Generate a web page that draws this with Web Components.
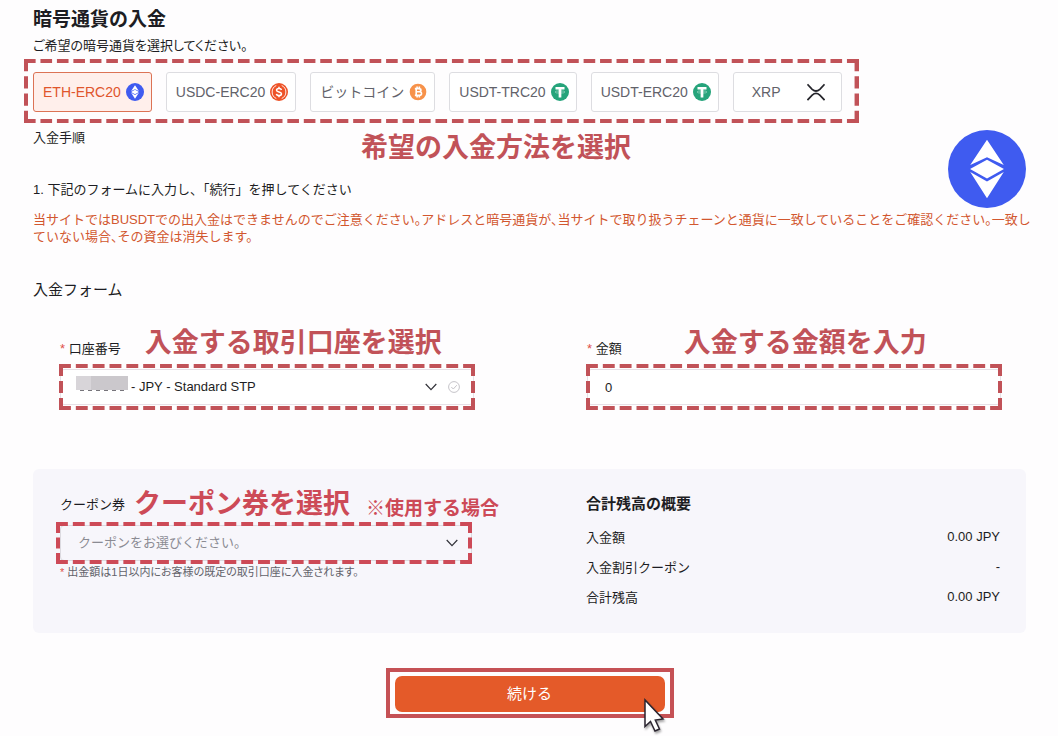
<!DOCTYPE html>
<html lang="ja">
<head>
<meta charset="utf-8">
<title>暗号通貨の入金</title>
<style>
  body {
    margin: 0;
    background: #fefdfe;
    color: #1d1d23;
    font: 13px/20px "Liberation Sans", "Noto Sans CJK JP", sans-serif;
    --mark: #c15258;
    --mark-hot: #cd4a57;
    --accent: #e45a29;
  }
</style>
</head>
<body>
<deposit-page></deposit-page>

<script>
const COINS = {
  eth: `<circle cx="20" cy="20" r="20" fill="#3f5bf0"/>
    <path fill="#fff" d="M20 5 28.6 18 20 14 11.4 18ZM20 15.2 28.7 20 20 24.9 11.3 20ZM11.4 21.6 20 26.4 28.6 21.6 20 35Z"/>`,
  usdc: `<circle cx="20" cy="20" r="20" fill="#ee5227"/>
    <path fill="none" stroke="#fff" stroke-width="2" d="M14 5.5a16 16 0 0 0 0 29M26 5.5a16 16 0 0 1 0 29"/>
    <path fill="none" stroke="#fff" stroke-width="3.4" d="M25.5 15.5c-.5-2.5-2.5-3.5-5.5-3.5-3.5 0-5.5 1.5-5.5 4 0 5.5 11 2.5 11 8 0 2.5-2 4-5.5 4-3.2 0-5.3-1.3-5.7-4M20 8.5V12M20 28v3.5"/>`,
  btc: `<circle cx="20" cy="20" r="18.5" fill="#f7924a"/>
    <path fill="none" stroke="#fff" stroke-width="3.6" d="M13 12.5h9c6 0 6 7 0 7h-6.5H23c6.5 0 6.5 8 0 8H13M16 12.5v15M18 8v4M23 8v4M18 28v4M23 28v4"/>`,
  usdt: `<circle cx="20" cy="20" r="20" fill="#26a47b"/>
    <path fill="#fff" d="M10 9h20v5.5h-7V32h-6V14.5h-7Z"/>
    <ellipse cx="20" cy="20" rx="11" ry="2.5" fill="none" stroke="#fff" stroke-opacity=".7" stroke-width="1.2"/>`,
  xrp: `<path fill="none" stroke="#25252b" stroke-width="3.8" d="M1 3 11.5 14q8.5 7.5 17 0L39 3M1 38 11.5 27q8.5-7.5 17 0L39 38"/>`
};

class CoinIcon extends HTMLElement {
  constructor() {
    super();
    this.attachShadow({ mode: 'open' });
  }

  connectedCallback() {
    this.shadowRoot.innerHTML = `
      <style>
        :host { display: block; flex: none; width: 18px; height: 18px; }
        svg { display: block; width: 100%; height: 100%; }
      </style>
      <svg viewBox="0 0 40 40" aria-hidden="true">${COINS[this.getAttribute('coin')]}</svg>
    `;
  }
}

class CoinChip extends HTMLElement {
  constructor() {
    super();
    this.attachShadow({ mode: 'open' });
  }

  connectedCallback() {
    const coin = this.getAttribute('coin');
    this.shadowRoot.innerHTML = `
      <style>
        :host { display: block; }
        button {
          display: flex;
          align-items: center;
          gap: 5px;
          height: 40px;
          padding: 0 7px 0 9px;
          border: 1px solid #dddde1;
          border-radius: 3px;
          background: #fff;
          color: #62626a;
          font: inherit;
          font-size: 14px;
          white-space: nowrap;
        }
        :host([selected]) button {
          border-color: #dc7355;
          background: #ffefeb;
          color: #e0552c;
        }
        :host([coin="xrp"]) button {
          gap: 26px;
          padding: 0 16px 0 18px;
        }
      </style>
      <button type="button" aria-pressed="${this.hasAttribute('selected')}">
        <slot></slot><coin-icon coin="${coin}"></coin-icon>
      </button>
    `;
  }
}

// Dashed highlight round whatever is slotted in.
// across / down = number of dashes on each side, so corners always close.
class MarkFrame extends HTMLElement {
  constructor() {
    super();
    this.attachShadow({ mode: 'open' });
  }

  connectedCallback() {
    const across = this.getAttribute('across') * 17 - 5;
    const down = this.getAttribute('down') * 17 - 5;
    this.shadowRoot.innerHTML = `
      <style>
        :host { display: block; position: relative; color: var(--mark); }
        svg {
          position: absolute;
          inset: 0;
          width: 100%;
          height: 100%;
          pointer-events: none;
        }
        line { stroke: currentColor; stroke-width: 8; stroke-dasharray: 12 5; }
      </style>
      <slot></slot>
      <svg aria-hidden="true">
        <line x1="0" y1="0" x2="100%" y2="0" pathLength="${across}"/>
        <line x1="0" y1="100%" x2="100%" y2="100%" pathLength="${across}"/>
        <line x1="0" y1="0" x2="0" y2="100%" pathLength="${down}"/>
        <line x1="100%" y1="0" x2="100%" y2="100%" pathLength="${down}"/>
      </svg>
    `;
  }
}

class MarkNote extends HTMLElement {
  constructor() {
    super();
    this.attachShadow({ mode: 'open' });
    this.shadowRoot.innerHTML = `
      <style>
        :host {
          display: block;
          color: var(--mark);
          font-size: 27px;
          font-weight: 700;
          line-height: 38px;
          white-space: nowrap;
        }
        :host([small]) { font-size: 19px; line-height: 26px; }
      </style>
      <slot></slot>
    `;
  }
}

class FormField extends HTMLElement {
  constructor() {
    super();
    this.attachShadow({ mode: 'open' });
  }

  connectedCallback() {
    const kind = this.getAttribute('kind');
    const value = this.getAttribute('value');
    const star = this.hasAttribute('required') ? '<i>*</i> ' : '';
    const chevron = `<svg class="chevron" viewBox="0 0 12 8" aria-hidden="true"><path d="M.7 1 6 6.7 11.3 1"/></svg>`;
    const controls = {
      account: `
        <select id="control"><option>${value}</option></select>
        <svg class="mask" viewBox="0 0 52 16" aria-hidden="true">
          <path fill="#d8d5d9" d="M0 0h15v14H0z"/><path fill="#cbc8cc" d="M15 0h37v14H15z"/>
          <path stroke="#77757b" stroke-dasharray="4 4" d="M4 14.5h46"/>
        </svg>
        <span class="icons">${chevron}
          <svg class="check" viewBox="0 0 12 12" aria-hidden="true"><circle cx="6" cy="6" r="5.4"/><path d="m3.3 6 2 2 3.5-3.8"/></svg>
        </span>`,
      amount: `<input id="control" type="text" inputmode="decimal" value="${value}">`,
      coupon: `<select id="control"><option>${value}</option></select><span class="icons">${chevron}</span>`
    };
    this.shadowRoot.innerHTML = `
      <style>
        :host { display: block; }
        .head { display: flex; align-items: flex-end; margin-bottom: 2px; }
        label { line-height: 26px; padding-left: 1px; white-space: nowrap; }
        i { color: #e0504a; font-style: normal; }
        ::slotted(mark-note) { margin-left: 24px; }
        .box { position: relative; }
        mark-frame { padding: 5px 1px; }
        select, input {
          appearance: none;
          display: block;
          box-sizing: border-box;
          width: 100%;
          height: 36px;
          padding: 0 17px;
          border: 1px solid #e7e0e6;
          border-radius: 4px;
          background: #fff;
          color: #1d1d23;
          font: inherit;
        }
        .mask { position: absolute; left: 16px; top: 7px; width: 52px; height: 16px; }
        .icons {
          position: absolute;
          inset: 0 14px 0 auto;
          display: flex;
          align-items: center;
          gap: 11px;
          pointer-events: none;
        }
        .icons svg { width: 12px; height: 12px; fill: none; stroke: #33333a; stroke-width: 1.2; }
        .icons .check { stroke: #c6c4c9; stroke-width: 1; }
        :host([kind="account"]) select { padding-left: 70px; }
        :host([kind="amount"]) ::slotted(mark-note) { margin-left: 62px; }
        :host([kind="coupon"]) .head { margin: 0; }
        :host([kind="coupon"]) label { line-height: 34px; }
        :host([kind="coupon"]) ::slotted(mark-note) { margin-left: 9px; line-height: 36px; color: var(--mark-hot); }
        :host([kind="coupon"]) ::slotted(mark-note[small]) { margin-left: 16px; line-height: 26px; }
        :host([kind="coupon"]) mark-frame { padding: 3px 0 3px 4px; margin: 0 3px 0 -3px; color: var(--mark-hot); }
        :host([kind="coupon"]) select { background: transparent; color: #8b8b93; border-color: #dcdae0; }
      </style>
      <div class="head">
        <label for="control">${star}${this.getAttribute('label')}</label>
        <slot></slot>
      </div>
      <mark-frame across="25" down="3">
        <div class="box">${controls[kind]}</div>
      </mark-frame>
    `;
  }
}

class BalanceSummary extends HTMLElement {
  constructor() {
    super();
    this.attachShadow({ mode: 'open' });
    this.shadowRoot.innerHTML = `
      <style>
        :host { display: block; }
        h3 { margin: 3px 0 4px; font-size: 15px; line-height: 30px; }
        dl { margin: 0; }
        div { display: flex; justify-content: space-between; padding-right: 2px; line-height: 30px; }
        dd { margin: 0; line-height: 28px; }
      </style>
      <h3>合計残高の概要</h3>
      <dl>
        <div><dt>入金額</dt><dd>0.00 JPY</dd></div>
        <div><dt>入金割引クーポン</dt><dd>-</dd></div>
        <div><dt>合計残高</dt><dd>0.00 JPY</dd></div>
      </dl>
    `;
  }
}

class SubmitButton extends HTMLElement {
  constructor() {
    super();
    this.attachShadow({ mode: 'open' });
    this.shadowRoot.innerHTML = `
      <style>
        :host {
          display: block;
          position: relative;
          box-sizing: border-box;
          width: 288px;
          max-width: 100%;
          padding: 4px 5px 2px;
          border: 4px solid #c55155;
        }
        button {
          display: block;
          width: 100%;
          height: 36px;
          border: 0;
          border-radius: 7px;
          background: var(--accent);
          color: #fff;
          font: inherit;
          font-size: 15px;
        }
        svg {
          position: absolute;
          right: 3px;
          bottom: -20px;
          width: 24px;
          height: 36px;
          filter: drop-shadow(1px 2px 1px rgba(0, 0, 0, .35));
        }
      </style>
      <button type="submit"><slot></slot></button>
      <svg viewBox="0 0 24 36" aria-hidden="true">
        <path fill="#fff" stroke="#2b2530" stroke-width="1.5" d="M2 2v26.5l5.5-5 4.5 9.5 4.5-2-4.2-9 7.7-1Z"/>
      </svg>
    `;
  }
}

class DepositPage extends HTMLElement {
  constructor() {
    super();
    this.attachShadow({ mode: 'open' });
    this.shadowRoot.innerHTML = `
      <style>
        :host { display: block; padding: 7px 32px 18px 33px; }
        h1, h2, p { margin: 0; }
        h1 { font-size: 19px; line-height: 26px; }
        h2 { font-size: 15px; font-weight: 400; margin-top: 35px; }
        .lead { margin-top: 3px; font-feature-settings: "palt"; }
        .coins {
          display: flex;
          gap: 14px;
          width: fit-content;
          margin: 3px 0 0 -9px;
          padding: 13px 17px 11px 9px;
        }
        .steps { display: flex; justify-content: space-between; }
        .steps > div { padding-top: 5px; }
        .steps coin-icon { width: 78px; height: 78px; margin-top: 7px; }
        .row { display: grid; grid-template-columns: 328px auto; margin-bottom: 12px; }
        .row mark-note { line-height: 40px; }
        .warn { margin: 3px -8px 0 0; line-height: 17px; color: #d2572f; font-feature-settings: "halt"; }
        .columns {
          display: grid;
          grid-template-columns: minmax(0, 1fr) minmax(0, 1fr);
          gap: 111px;
          padding: 0 24px 0 26px;
        }
        .fields { margin-top: 24px; }
        .panel {
          margin-top: 59px;
          padding-top: 17px;
          padding-bottom: 20px;
          border-radius: 6px;
          background: #f7f6fb;
        }
        .hint { padding-left: 1px; font-size: 11px; line-height: 16px; color: #62626a; font-feature-settings: "palt"; }
        .hint i { color: #e0504a; font-style: normal; }
        submit-button { margin: 35px auto 0; }
      </style>
      <h1>暗号通貨の入金</h1>
      <p class="lead">ご希望の暗号通貨を選択してください。</p>
      <mark-frame class="coins" across="51" down="4">
        <coin-chip coin="eth" selected>ETH-ERC20</coin-chip>
        <coin-chip coin="usdc">USDC-ERC20</coin-chip>
        <coin-chip coin="btc">ビットコイン</coin-chip>
        <coin-chip coin="usdt">USDT-TRC20</coin-chip>
        <coin-chip coin="usdt">USDT-ERC20</coin-chip>
        <coin-chip coin="xrp">XRP</coin-chip>
      </mark-frame>
      <div class="steps">
        <div>
          <div class="row">
            <p>入金手順</p>
            <mark-note>希望の入金方法を選択</mark-note>
          </div>
          <p>1. 下記のフォームに入力し、「続行」を押してください</p>
        </div>
        <coin-icon coin="eth"></coin-icon>
      </div>
      <p class="warn">当サイトではBUSDTでの出入金はできませんのでご注意ください。アドレスと暗号通貨が、当サイトで取り扱うチェーンと通貨に一致していることをご確認ください。一致していない場合、その資金は消失します。</p>
      <h2>入金フォーム</h2>
      <form>
        <div class="columns fields">
          <form-field kind="account" label="口座番号" value="- JPY - Standard STP" required>
            <mark-note>入金する取引口座を選択</mark-note>
          </form-field>
          <form-field kind="amount" label="金額" value="0" required>
            <mark-note>入金する金額を入力</mark-note>
          </form-field>
        </div>
        <div class="columns panel">
          <div>
            <form-field kind="coupon" label="クーポン券" value="クーポンをお選びください。">
              <mark-note>クーポン券を選択</mark-note>
              <mark-note small>※使用する場合</mark-note>
            </form-field>
            <p class="hint"><i>*</i> 出金額は1日以内にお客様の既定の取引口座に入金されます。</p>
          </div>
          <balance-summary></balance-summary>
        </div>
        <submit-button>続ける</submit-button>
      </form>
    `;
  }
}

customElements.define('coin-icon', CoinIcon);
customElements.define('coin-chip', CoinChip);
customElements.define('mark-frame', MarkFrame);
customElements.define('mark-note', MarkNote);
customElements.define('form-field', FormField);
customElements.define('balance-summary', BalanceSummary);
customElements.define('submit-button', SubmitButton);
customElements.define('deposit-page', DepositPage);
</script>
</body>
</html>
